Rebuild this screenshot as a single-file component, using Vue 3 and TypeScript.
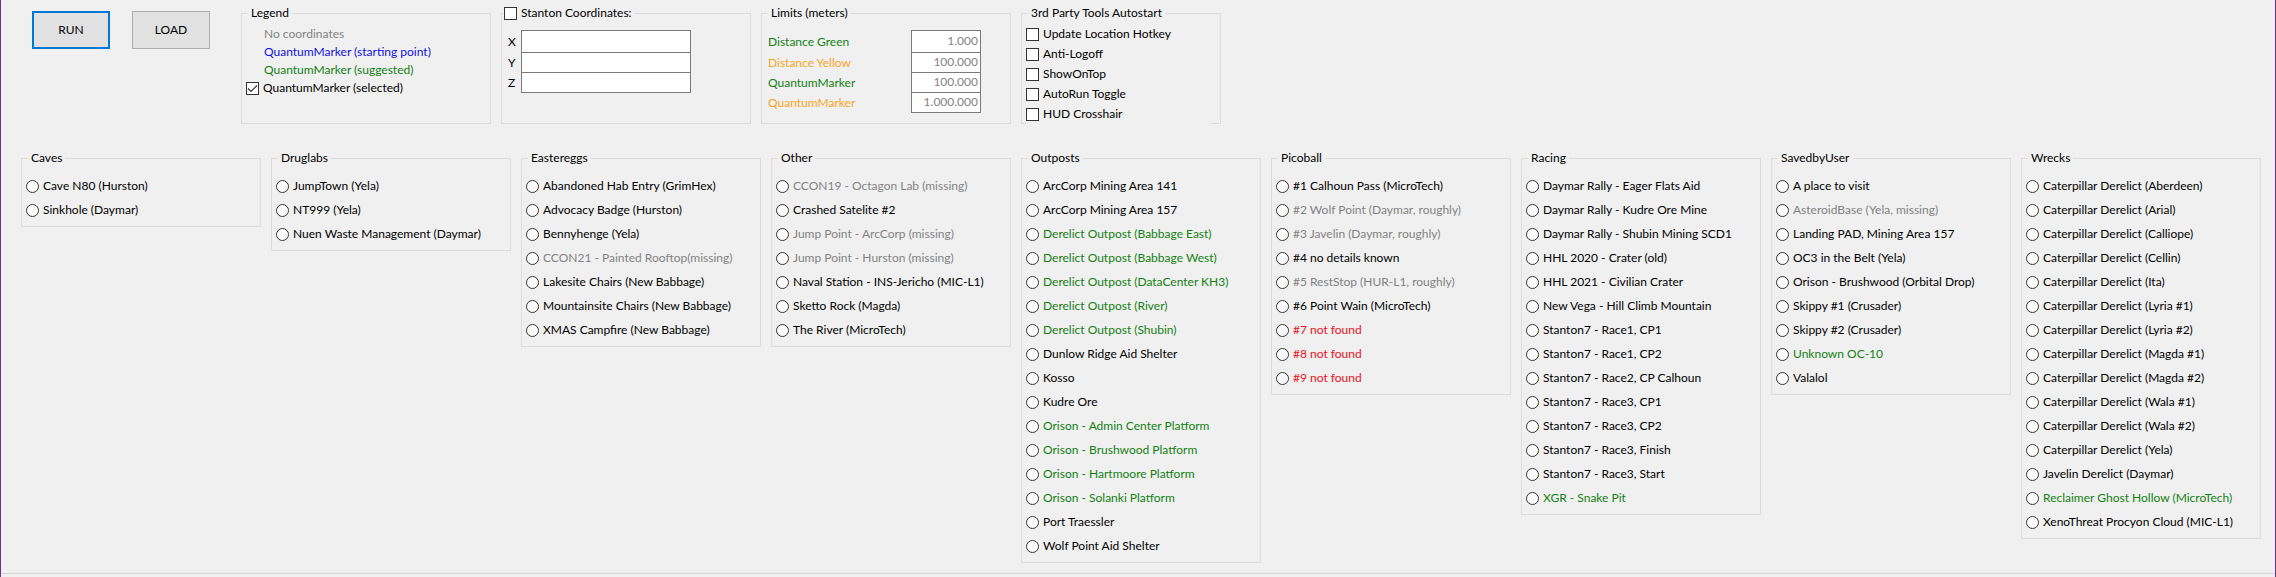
<script setup lang="ts">
import { reactive, ref } from 'vue'

type Tone = 'plain' | 'muted' | 'green' | 'blue' | 'orange' | 'red'

interface Place {
  name: string
  tone: Tone
}

interface PlaceGroup {
  title: string
  places: Place[]
}

const list = (names: string[], tone: Tone = 'plain'): Place[] =>
  names.map((name) => ({ name, tone }))

const groups: PlaceGroup[] = [
  { title: 'Caves', places: list(['Cave N80 (Hurston)', 'Sinkhole (Daymar)']) },
  {
    title: 'Druglabs',
    places: list(['JumpTown (Yela)', 'NT999 (Yela)', 'Nuen Waste Management (Daymar)']),
  },
  {
    title: 'Eastereggs',
    places: [
      ...list(['Abandoned Hab Entry (GrimHex)', 'Advocacy Badge (Hurston)', 'Bennyhenge (Yela)']),
      ...list(['CCON21 - Painted Rooftop(missing)'], 'muted'),
      ...list([
        'Lakesite Chairs (New Babbage)',
        'Mountainsite Chairs (New Babbage)',
        'XMAS Campfire (New Babbage)',
      ]),
    ],
  },
  {
    title: 'Other',
    places: [
      ...list(['CCON19 - Octagon Lab (missing)'], 'muted'),
      ...list(['Crashed Satelite #2']),
      ...list(['Jump Point - ArcCorp (missing)', 'Jump Point - Hurston (missing)'], 'muted'),
      ...list([
        'Naval Station - INS-Jericho (MIC-L1)',
        'Sketto Rock (Magda)',
        'The River (MicroTech)',
      ]),
    ],
  },
  {
    title: 'Outposts',
    places: [
      ...list(['ArcCorp Mining Area 141', 'ArcCorp Mining Area 157']),
      ...list(
        [
          'Derelict Outpost (Babbage East)',
          'Derelict Outpost (Babbage West)',
          'Derelict Outpost (DataCenter KH3)',
          'Derelict Outpost (River)',
          'Derelict Outpost (Shubin)',
        ],
        'green',
      ),
      ...list(['Dunlow Ridge Aid Shelter', 'Kosso', 'Kudre Ore']),
      ...list(
        [
          'Orison - Admin Center Platform',
          'Orison - Brushwood Platform',
          'Orison - Hartmoore Platform',
          'Orison - Solanki Platform',
        ],
        'green',
      ),
      ...list(['Port Traessler', 'Wolf Point Aid Shelter']),
    ],
  },
  {
    title: 'Picoball',
    places: [
      ...list(['#1 Calhoun Pass (MicroTech)']),
      ...list(['#2 Wolf Point (Daymar, roughly)', '#3 Javelin (Daymar, roughly)'], 'muted'),
      ...list(['#4 no details known']),
      ...list(['#5 RestStop (HUR-L1, roughly)'], 'muted'),
      ...list(['#6 Point Wain (MicroTech)']),
      ...list(['#7 not found', '#8 not found', '#9 not found'], 'red'),
    ],
  },
  {
    title: 'Racing',
    places: [
      ...list([
        'Daymar Rally - Eager Flats Aid',
        'Daymar Rally - Kudre Ore Mine',
        'Daymar Rally - Shubin Mining SCD1',
        'HHL 2020 - Crater (old)',
        'HHL 2021 - Civilian Crater',
        'New Vega - Hill Climb Mountain',
        'Stanton7 - Race1, CP1',
        'Stanton7 - Race1, CP2',
        'Stanton7 - Race2, CP Calhoun',
        'Stanton7 - Race3, CP1',
        'Stanton7 - Race3, CP2',
        'Stanton7 - Race3, Finish',
        'Stanton7 - Race3, Start',
      ]),
      ...list(['XGR - Snake Pit'], 'green'),
    ],
  },
  {
    title: 'SavedbyUser',
    places: [
      ...list(['A place to visit']),
      ...list(['AsteroidBase (Yela, missing)'], 'muted'),
      ...list([
        'Landing PAD, Mining Area 157',
        'OC3 in the Belt (Yela)',
        'Orison - Brushwood (Orbital Drop)',
        'Skippy #1 (Crusader)',
        'Skippy #2 (Crusader)',
      ]),
      ...list(['Unknown OC-10'], 'green'),
      ...list(['Valalol']),
    ],
  },
  {
    title: 'Wrecks',
    places: [
      ...list([
        'Caterpillar Derelict (Aberdeen)',
        'Caterpillar Derelict (Arial)',
        'Caterpillar Derelict (Calliope)',
        'Caterpillar Derelict (Cellin)',
        'Caterpillar Derelict (Ita)',
        'Caterpillar Derelict (Lyria #1)',
        'Caterpillar Derelict (Lyria #2)',
        'Caterpillar Derelict (Magda #1)',
        'Caterpillar Derelict (Magda #2)',
        'Caterpillar Derelict (Wala #1)',
        'Caterpillar Derelict (Wala #2)',
        'Caterpillar Derelict (Yela)',
        'Javelin Derelict (Daymar)',
      ]),
      ...list(['Reclaimer Ghost Hollow (MicroTech)'], 'green'),
      ...list(['XenoThreat Procyon Cloud (MIC-L1)']),
    ],
  },
]

const axes = ['X', 'Y', 'Z'] as const
const coordinates = reactive<Record<string, string>>({ X: '', Y: '', Z: '' })

const limits = reactive<{ label: string; tone: Tone; value: string }[]>([
  { label: 'Distance Green', tone: 'green', value: '1.000' },
  { label: 'Distance Yellow', tone: 'orange', value: '100.000' },
  { label: 'QuantumMarker', tone: 'green', value: '100.000' },
  { label: 'QuantumMarker', tone: 'orange', value: '1.000.000' },
])

const tools = reactive([
  { label: 'Update Location Hotkey', enabled: false },
  { label: 'Anti-Logoff', enabled: false },
  { label: 'ShowOnTop', enabled: false },
  { label: 'AutoRun Toggle', enabled: false },
  { label: 'HUD Crosshair', enabled: false },
])

const markerSelected = ref(true)
const useCoordinates = ref(false)
const destination = ref('')
</script>

<template>
  <main class="window">
    <div class="content">
      <section class="toolbar">
        <div class="actions">
          <button type="button" class="action primary">RUN</button>
          <button type="button" class="action">LOAD</button>
        </div>

        <fieldset class="box">
          <legend>Legend</legend>
          <div class="key muted">No coordinates</div>
          <div class="key blue">QuantumMarker (starting point)</div>
          <div class="key green">QuantumMarker (suggested)</div>
          <label class="option">
            <input v-model="markerSelected" type="checkbox" class="check" />
            <span>QuantumMarker (selected)</span>
          </label>
        </fieldset>

        <fieldset class="box">
          <legend class="check-legend">
            <label class="option">
              <input v-model="useCoordinates" type="checkbox" class="check" />
              <span>Stanton Coordinates:</span>
            </label>
          </legend>
          <div class="fields">
            <div v-for="axis in axes" :key="axis" class="field">
              <label :for="`axis-${axis}`" class="axis">{{ axis }}</label>
              <input :id="`axis-${axis}`" v-model="coordinates[axis]" type="text" class="text wide" />
            </div>
          </div>
        </fieldset>

        <fieldset class="box">
          <legend>Limits (meters)</legend>
          <div class="fields">
            <div v-for="(limit, i) in limits" :key="i" class="field">
              <label :for="`limit-${i}`" class="limit" :class="limit.tone">{{ limit.label }}</label>
              <input :id="`limit-${i}`" v-model="limit.value" type="text" class="text number" />
            </div>
          </div>
        </fieldset>

        <fieldset class="box narrow">
          <legend>3rd Party Tools Autostart</legend>
          <div class="tools">
            <label v-for="tool in tools" :key="tool.label" class="option tool">
              <input v-model="tool.enabled" type="checkbox" class="check" />
              <span>{{ tool.label }}</span>
            </label>
          </div>
        </fieldset>
      </section>

      <section class="groups">
        <fieldset v-for="group in groups" :key="group.title" class="box group">
          <legend>{{ group.title }}</legend>
          <label v-for="place in group.places" :key="place.name" class="option place">
            <input
              v-model="destination"
              type="radio"
              name="destination"
              class="radio"
              :value="place.name"
            />
            <span :class="place.tone">{{ place.name }}</span>
          </label>
        </fieldset>
      </section>
    </div>
  </main>
</template>

<style>
body {
  margin: 0;
  background: #f0f0f0;
}
</style>

<style scoped>
.window {
  box-sizing: border-box;
  min-height: 100vh;
  border-left: 1px solid #6b2fa0;
  border-right: 1px solid #6b2fa0;
  background: #f0f0f0;
  color: #000;
  font-family: Lato, 'Open Sans', sans-serif;
  font-size: 12px;
  line-height: 18px;
  white-space: nowrap;
}

.content {
  padding: 4px 14px 10px 20px;
  border-bottom: 1px solid #d4d4d4;
}

.toolbar {
  display: flex;
  gap: 10px;
  min-height: 120px;
}

.actions {
  display: flex;
  align-items: flex-start;
  gap: 22px;
  padding: 7px 21px 0 11px;
}

.action {
  box-sizing: border-box;
  width: 78px;
  height: 38px;
  padding: 0;
  border: 1px solid #adadad;
  border-radius: 0;
  background: #e1e1e1;
  color: #000;
  font: inherit;
}

.action.primary {
  border: 2px solid #0078d7;
}

.box {
  box-sizing: border-box;
  flex: 0 1 250px;
  min-width: 0;
  margin: 0;
  padding: 3px 4px 0;
  border: 1px solid #dcdcdc;
}

.box.narrow {
  flex-basis: 200px;
  padding-top: 2px;
}

legend {
  height: 18px;
  margin-left: 2px;
  padding: 0 3px;
}

.check-legend {
  margin-left: -3px;
  padding: 0 3px 0 1px;
}

.key {
  padding-left: 18px;
}

.option {
  display: flex;
  align-items: center;
  gap: 4px;
}

.check,
.radio {
  appearance: none;
  box-sizing: border-box;
  flex: none;
  width: 13px;
  height: 13px;
  margin: 0;
  border: 1px solid #333;
  background: #fff;
}

.radio {
  border-radius: 50%;
}

.check:checked {
  background: #fff
    url("data:image/svg+xml,%3Csvg xmlns='http://www.w3.org/2000/svg' viewBox='0 0 11 11'%3E%3Cpath d='M1 5.5 4 8.5 10 2.5' fill='none' stroke='%23333' stroke-width='1.2'/%3E%3C/svg%3E")
    center / 11px 11px no-repeat;
}

.radio:checked {
  background: radial-gradient(circle, #333 3px, #fff 4px);
}

.fields {
  display: flex;
  flex-direction: column;
  padding: 5px 2px 0;
}

.field {
  display: flex;
  align-items: center;
}

.field + .field {
  margin-top: -1px;
}

.axis {
  width: 13px;
}

.limit {
  width: 143px;
}

.text {
  box-sizing: border-box;
  height: 21px;
  padding: 0 2px 2px;
  border: 1px solid #7a7a7a;
  border-radius: 0;
  background: #fff;
  color: #000;
  font: inherit;
}

.field:first-child .text {
  height: 23px;
}

.wide {
  width: 170px;
}

.number {
  width: 70px;
  color: #838383;
  text-align: right;
}

/* The tool list is taller than its frame and covers part of the lower edge. */
.tools {
  width: 185px;
  margin-bottom: -1px;
  background: #f0f0f0;
}

.tool {
  height: 20px;
}

.groups {
  display: grid;
  grid-template-columns: repeat(9, minmax(0, 1fr));
  align-items: start;
  gap: 10px;
  margin-top: 25px;
}

.group {
  padding: 7px 4px 4px;
}

.place {
  height: 24px;
}

.muted {
  color: #838383;
}

.green {
  color: #138013;
}

.blue {
  color: #1010e0;
}

.orange {
  color: #f5a623;
}

.red {
  color: #e81123;
}
</style>
